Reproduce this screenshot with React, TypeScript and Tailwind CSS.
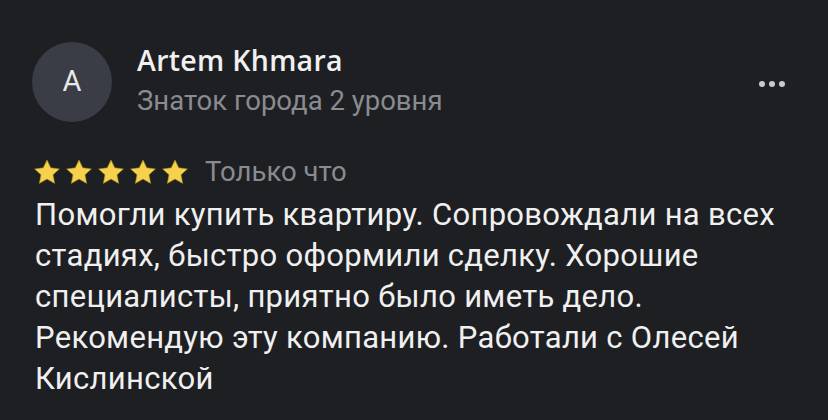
import React from "react";

function Star() {
  return (
    <svg width="30" height="29" viewBox="0 0 24 24" className="block">
      <path
        d="M12 1.6l3.1 6.55 7.15.87-5.28 4.9 1.4 7.08L12 17.45l-6.37 3.55 1.4-7.08-5.28-4.9 7.15-.87z"
        fill="#f5d24b"
        stroke="#a8862a"
        strokeWidth="0.5"
        strokeLinejoin="round"
      />
    </svg>
  );
}

export default function App() {
  const lines = [
    "Помогли купить квартиру. Сопровождали на всех",
    "стадиях, быстро оформили сделку. Хорошие",
    "специалисты, приятно было иметь дело.",
    "Рекомендую эту компанию. Работали с Олесей",
    "Кислинской",
  ];
  return (
    <div
      className="w-[828px] h-[420px] bg-[#1e1f23] overflow-hidden text-[#f0f0f0]"
      style={{ fontFamily: "Roboto, 'Noto Sans', sans-serif" }}
    >
      <div className="flex items-start pl-[32px] pr-[43px] pt-[42px]">
        <div className="w-[80px] h-[80px] rounded-full bg-[#3a3d45] flex items-center justify-center text-[29px] text-[#e8e8e8]">
          A
        </div>
        <div className="ml-[25px] flex flex-col pt-[2px]">
          <div
            className="text-[28.5px] leading-[32px] font-semibold tracking-[0.3px]"
            style={{ fontFamily: "'Open Sans', Roboto, sans-serif" }}
          >
            Artem Khmara
          </div>
          <div className="text-[27.5px] leading-[32px] text-[#8a8b90] mt-[9px]">
            Знаток города 2 уровня
          </div>
        </div>
        <div className="ml-auto mt-[39px] flex gap-[4px]">
          <span className="w-[6px] h-[6px] rounded-full bg-[#c9c9ce]" />
          <span className="w-[6px] h-[6px] rounded-full bg-[#c9c9ce]" />
          <span className="w-[6px] h-[6px] rounded-full bg-[#c9c9ce]" />
        </div>
      </div>
      <div className="flex items-center pl-[32px] mt-[35px]">
        <div className="flex gap-[2px]">
          <Star />
          <Star />
          <Star />
          <Star />
          <Star />
        </div>
        <span className="ml-[15px] text-[27.5px] leading-[30px] text-[#8a8b90]">Только что</span>
      </div>
      <div className="pl-[35px] mt-[7px] text-[31px] leading-[41px] tracking-[0.3px]">
        {lines.map((l) => (
          <div key={l} className="whitespace-nowrap">
            {l}
          </div>
        ))}
      </div>
    </div>
  );
}
